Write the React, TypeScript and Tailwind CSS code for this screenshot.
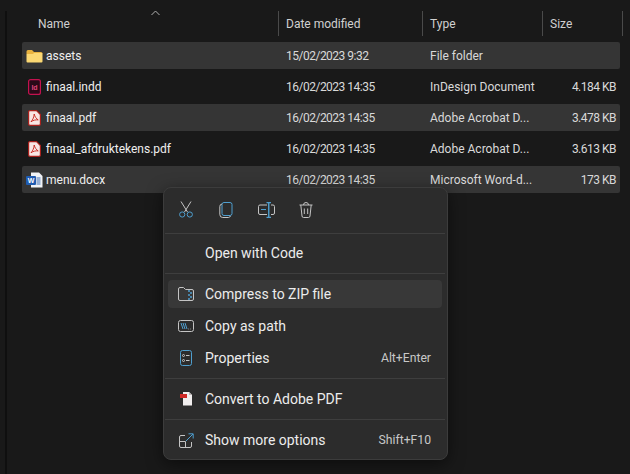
import React from 'react';

const font = { fontFamily: 'Roboto, "Open Sans", sans-serif' };

function FolderIcon() {
  return (
    <svg width="17" height="14" viewBox="0 0 17 14">
      <path d="M0.5 2.5 A1.5 1.5 0 0 1 2 1 H6 L8 3 H15 A1.5 1.5 0 0 1 16.5 4.5 V5 H0.5 Z" fill="#e8b23f" />
      <path d="M0.5 5 L7 5 L8 4 H15.5 A1 1 0 0 1 16.5 5 V12.5 A1 1 0 0 1 15.5 13.5 H1.5 A1 1 0 0 1 0.5 12.5 Z" fill="#fbd873" />
    </svg>
  );
}

function IndesignIcon() {
  return (
    <svg width="13" height="16" viewBox="0 0 13 16">
      <rect x="0.6" y="0.6" width="11.8" height="14.8" rx="2" fill="#2a0a18" stroke="#c3124f" strokeWidth="1.2" />
      <text x="6.5" y="10.5" fontSize="7" fontWeight="700" textAnchor="middle" fill="#e0447a" fontFamily="Liberation Sans, sans-serif">Id</text>
    </svg>
  );
}

function PdfIcon() {
  return (
    <svg width="13" height="16" viewBox="0 0 13 16">
      <path d="M1.5 0.6 H8.5 L12.4 4.5 V14 A1.4 1.4 0 0 1 11 15.4 H2 A1.4 1.4 0 0 1 0.6 14 V1.5 Z" fill="#f8e6e4" stroke="#a8201c" strokeWidth="1.2" />
      <path d="M6.2 4 C6 7 5 9.5 3 11.8 C5 10.2 8 9.6 10.2 9.9 C8.4 9 6.8 6.6 6.2 4 Z" fill="none" stroke="#c5221b" strokeWidth="0.9" />
    </svg>
  );
}

function WordIcon() {
  return (
    <svg width="17" height="16" viewBox="0 0 17 16">
      <path d="M5 0.5 H13 L16.5 4 V15.5 H5 Z" fill="#f1f3f6" />
      <path d="M10.5 6 H14.5 M10.5 8 H14.5 M10.5 10 H14.5 M10.5 12 H14.5" stroke="#3f6fb5" strokeWidth="1" />
      <rect x="0" y="4" width="10" height="9" rx="1" fill="#1f5bb0" />
      <text x="5" y="11.2" fontSize="7" fontWeight="700" textAnchor="middle" fill="#fff" fontFamily="Liberation Sans, sans-serif">W</text>
    </svg>
  );
}

const files = [
  { name: 'assets', date: '15/02/2023 9:32', type: 'File folder', size: '', icon: <FolderIcon /> },
  { name: 'finaal.indd', date: '16/02/2023 14:35', type: 'InDesign Document', size: '4.184 KB', icon: <IndesignIcon /> },
  { name: 'finaal.pdf', date: '16/02/2023 14:35', type: 'Adobe Acrobat D...', size: '3.478 KB', icon: <PdfIcon /> },
  { name: 'finaal_afdruktekens.pdf', date: '16/02/2023 14:35', type: 'Adobe Acrobat D...', size: '3.613 KB', icon: <PdfIcon /> },
  { name: 'menu.docx', date: '16/02/2023 14:35', type: 'Microsoft Word-d...', size: '173 KB', icon: <WordIcon /> },
];

const gray = '#c4c4c4';
const blue = '#4f9fcf';

function CutIcon() {
  return (
    <svg width="16" height="17" viewBox="0 0 16 17" fill="none" strokeWidth="1">
      <path d="M3 0.5 L9.5 11 M13 0.5 L6.5 11" stroke={gray} />
      <circle cx="4.2" cy="13.5" r="2.6" stroke={blue} />
      <circle cx="11.8" cy="13.5" r="2.6" stroke={blue} />
    </svg>
  );
}

function CopyIcon() {
  return (
    <svg width="14" height="16" viewBox="0 0 14 16" fill="none" strokeWidth="1">
      <rect x="3" y="0.5" width="10" height="13" rx="2" stroke={blue} />
      <path d="M3 2 A2.5 2.5 0 0 0 0.8 4.5 V12.5 A3 3 0 0 0 3.8 15.5 H9.5 A2.5 2.5 0 0 0 11.5 14" stroke={gray} />
    </svg>
  );
}

function RenameIcon() {
  return (
    <svg width="17" height="16" viewBox="0 0 17 16" fill="none" strokeWidth="1">
      <path d="M9 3 H2 A1.5 1.5 0 0 0 0.5 4.5 V11 A1.5 1.5 0 0 0 2 12.5 H9" stroke={gray} />
      <path d="M13 3 H15 A1.5 1.5 0 0 1 16.5 4.5 V11 A1.5 1.5 0 0 1 15 12.5 H13" stroke={gray} />
      <path d="M3 7.5 H8" stroke={blue} />
      <path d="M8.5 0.5 H13 M8.5 15.5 H13 M10.75 0.5 V15.5" stroke={blue} strokeWidth="1.4" />
    </svg>
  );
}

function TrashIcon() {
  return (
    <svg width="14" height="16" viewBox="0 0 14 16" fill="none" stroke={gray} strokeWidth="1">
      <path d="M0.5 3 H13.5 M4.5 3 A2.5 2.5 0 0 1 9.5 3" />
      <path d="M1.8 3 L3 14 A1.6 1.6 0 0 0 4.6 15.5 H9.4 A1.6 1.6 0 0 0 11 14 L12.2 3" />
      <path d="M5.3 6.5 V12 M8.7 6.5 V12" />
    </svg>
  );
}

function ZipIcon() {
  return (
    <svg width="16" height="14" viewBox="0 0 16 14" fill="none" strokeWidth="1">
      <path d="M0.5 2 A1.5 1.5 0 0 1 2 0.5 H5.5 L7.5 2.5 H14 A1.5 1.5 0 0 1 15.5 4 V12 A1.5 1.5 0 0 1 14 13.5 H2 A1.5 1.5 0 0 1 0.5 12 Z" stroke={gray} />
      <path d="M11 3 V5 M13 5 V7 M11 7 V9 M13 9 V11 M11 11 V13" stroke={blue} strokeWidth="1.5" />
    </svg>
  );
}

function PathIcon() {
  return (
    <svg width="16" height="12" viewBox="0 0 16 12" fill="none" strokeWidth="1">
      <rect x="0.5" y="0.5" width="15" height="11" rx="2" stroke={gray} />
      <path d="M3 3 L5 9 M5 3 L7 9 M7 3 L9 9" stroke={blue} />
      <path d="M10.5 9 H11 M12.2 9 H12.7" stroke={gray} />
    </svg>
  );
}

function PropertiesIcon() {
  return (
    <svg width="12" height="16" viewBox="0 0 12 16" fill="none" strokeWidth="1">
      <rect x="0.5" y="0.5" width="11" height="15" rx="2" stroke={blue} />
      <circle cx="3.5" cy="5.5" r="1" stroke={gray} />
      <circle cx="3.5" cy="10.5" r="1" stroke={gray} />
      <path d="M6 5.5 H9.5 M6 10.5 H9.5" stroke={gray} />
    </svg>
  );
}

function AdobePdfIcon() {
  return (
    <svg width="13" height="14" viewBox="0 0 13 14">
      <path d="M3 0 H9 L12 3 V13.5 H3 Z" fill="#f1eeee" />
      <path d="M9 0 L12 3 H9 Z" fill="#bdb8b8" />
      <rect x="0" y="2" width="7" height="4" fill="#cf2a27" />
    </svg>
  );
}

function MoreIcon() {
  return (
    <svg width="15" height="15" viewBox="0 0 15 15" fill="none" strokeWidth="1">
      <path d="M6 2.5 H2 A1.5 1.5 0 0 0 0.5 4 V13 A1.5 1.5 0 0 0 2 14.5 H11 A1.5 1.5 0 0 0 12.5 13 V9" stroke={gray} />
      <path d="M0.5 8.5 H6.5 V14.5" stroke={gray} />
      <path d="M7 8 L14 1 M9.5 0.8 H14.2 V5.5" stroke={blue} />
    </svg>
  );
}

function Separator() {
  return <div className="h-px bg-[#3e3e3e] my-1 ml-[1px] mr-[2px]"></div>;
}

function MenuItem({ icon, label, shortcut, active }: { icon?: React.ReactNode; label: string; shortcut?: string; active?: boolean }) {
  return (
    <div className="h-8 flex items-center">
      <div className={`flex items-center h-7 w-[274px] ml-[4px] rounded-[4px] ${active ? 'bg-[#383838]' : ''}`}>
        <div className="w-[37px] flex justify-center items-center shrink-0 pr-[1px]">{icon}</div>
        <span className="text-[14px] text-[#ececec]">{label}</span>
        {shortcut && <span className="ml-auto pr-[11px] text-[12.2px] text-[#c8c8c8]">{shortcut}</span>}
      </div>
    </div>
  );
}

function App() {
  return (
    <div className="relative w-[630px] h-[474px] bg-[#191919] overflow-hidden pt-[11px] pl-[5px]" style={font}>
      <div className="border-l-2 border-[#0f0f0f] h-full pl-[15px]">
        {/* header */}
        <div className="relative grid grid-cols-[257px_144px_120px_80px] h-[25px] items-center text-[12px] text-[#d0d0d0]">
          <span className="pl-[16px] border-r border-[#4a4a4a] h-full flex items-center">Name</span>
          <span className="pl-[7px] border-r border-[#4a4a4a] h-full flex items-center">Date modified</span>
          <span className="pl-[7px] border-r border-[#4a4a4a] h-full flex items-center">Type</span>
          <span className="pl-[7px] border-r border-[#4a4a4a] h-full flex items-center">Size</span>
          <svg className="absolute left-[129px] top-[-1px]" width="9" height="6" viewBox="0 0 9 6" fill="none" stroke="#b0b0b0">
            <path d="M0.5 5 L4.5 1 L8.5 5" />
          </svg>
        </div>

        {/* file rows */}
        <div className="mt-[6px] flex flex-col gap-1 w-[598px]">
          {files.map((f, i) => (
            <div key={f.name} className={`grid grid-cols-[257px_144px_120px_77px] h-[27px] items-center text-[12px] text-[#d9d9d9] rounded-[2px] ${i % 2 === 0 ? 'bg-[#353535]' : ''}`}>
              <div className="flex items-center text-[#efefef]">
                <div className="w-6 flex justify-center shrink-0">{f.icon}</div>
                <span>{f.name}</span>
              </div>
              <span className="pl-[7px] tracking-[-0.5px]">{f.date}</span>
              <span className="pl-[7px]">{f.type}</span>
              <span className="text-right pr-[4px] tracking-[-0.5px]">{f.size}</span>
            </div>
          ))}
        </div>
      </div>

      {/* context menu */}
      <div className="absolute left-[163px] top-[187px] w-[285px] h-[273px] bg-[#2c2c2c] border border-[#3c3c3c] rounded-[8px] shadow-[0_4px_16px_rgba(0,0,0,0.5)]">
        <div className="h-[45px] flex items-center pl-[2px] pb-[2px]">
          <div className="w-10 flex justify-center"><CutIcon /></div>
          <div className="w-10 flex justify-center"><CopyIcon /></div>
          <div className="w-10 flex justify-center"><RenameIcon /></div>
          <div className="w-10 flex justify-center"><TrashIcon /></div>
        </div>
        <div className="h-px bg-[#3e3e3e] ml-[1px] mr-[2px] mb-[3px]"></div>
        <MenuItem label="Open with Code" />
        <Separator />
        <MenuItem icon={<ZipIcon />} label="Compress to ZIP file" active />
        <MenuItem icon={<PathIcon />} label="Copy as path" />
        <MenuItem icon={<PropertiesIcon />} label="Properties" shortcut="Alt+Enter" />
        <Separator />
        <MenuItem icon={<AdobePdfIcon />} label="Convert to Adobe PDF" />
        <Separator />
        <MenuItem icon={<MoreIcon />} label="Show more options" shortcut="Shift+F10" />
      </div>
    </div>
  );
}

export default App;
